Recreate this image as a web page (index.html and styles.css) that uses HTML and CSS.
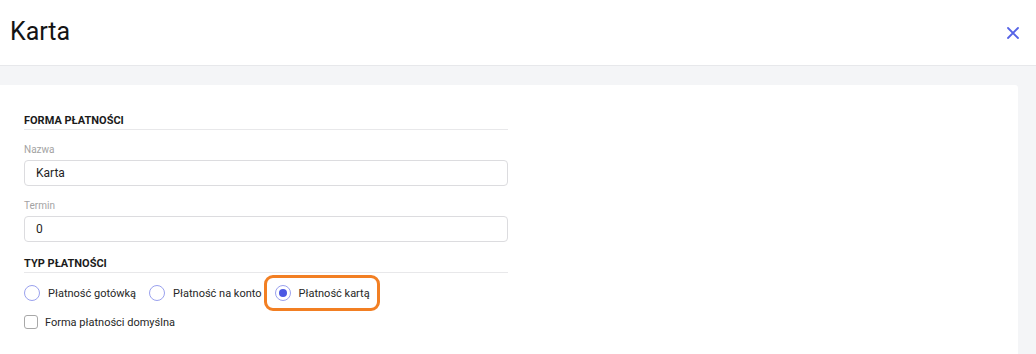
FILE: index.html
```html
<!DOCTYPE html>
<html lang="pl">
<head>
    <meta charset="UTF-8">
    <meta name="viewport" content="width=device-width, initial-scale=1.0">
    <title>Karta</title>
    <link rel="stylesheet" href="styles.css">
</head>
<body>
    <header class="modal-header">
        <h1>Karta</h1>
        <button type="button" class="close-btn" aria-label="Zamknij">
            <svg width="12" height="12" viewBox="0 0 12 12">
                <path d="M1 1 L11 11 M11 1 L1 11" stroke="currentColor" stroke-width="1.8" stroke-linecap="round"/>
            </svg>
        </button>
    </header>

    <main class="modal-body">
        <form class="card">
            <!-- forma płatności -->
            <div class="section-title">Forma płatności</div>
            <div class="form-group">
                <label for="nazwa">Nazwa</label>
                <input type="text" id="nazwa" value="Karta">
            </div>
            <div class="form-group">
                <label for="termin">Termin</label>
                <input type="text" id="termin" value="0">
            </div>

            <!-- typ płatności -->
            <div class="section-title">Typ płatności</div>
            <div class="radio-row">
                <label class="radio">
                    <input type="radio" name="typ">
                    <span>Płatność gotówką</span>
                </label>
                <label class="radio">
                    <input type="radio" name="typ">
                    <span>Płatność na konto</span>
                </label>
                <label class="radio highlight">
                    <input type="radio" name="typ" checked>
                    <span>Płatność kartą</span>
                </label>
            </div>
            <label class="checkbox">
                <input type="checkbox">
                <span>Forma płatności domyślna</span>
            </label>
        </form>
    </main>
</body>
</html>
```

FILE: styles.css
```css
body {
    font-family: Roboto, "Liberation Sans", Arial, sans-serif;
    margin: 0;
    padding: 0;
    background-color: #f4f5f7;
    color: #1f1f1f;
    height: 100vh;
    display: flex;
    flex-direction: column;
    overflow: hidden;
}
.modal-header {
    flex: none;
    height: 65px;
    background-color: #fff;
    border-bottom: 1px solid #e7e8eb;
    display: flex;
    align-items: center;
    justify-content: space-between;
    padding: 0 17px 0 10px;
}
.modal-header h1 {
    margin: 0;
    font-size: 25px;
    font-weight: 400;
    color: #141414;
    padding-bottom: 3px;
}
.close-btn {
    border: none;
    background: none;
    padding: 0;
    width: 12px;
    height: 12px;
    color: #5563e6;
    display: flex;
    cursor: pointer;
}
.modal-body {
    flex: 1;
    display: flex;
    padding: 19px 18px 0 0;
}
.card {
    flex: 1;
    background-color: #fff;
    border-radius: 0 3px 0 0;
    padding: 29px 24px 0 24px;
}
.section-title {
    width: 484px;
    font-size: 11px;
    line-height: 13px;
    font-weight: 700;
    text-transform: uppercase;
    color: #1b1b1b;
    padding-bottom: 2px;
    border-bottom: 1px solid #e8e8ea;
    margin-bottom: 14px;
}
.form-group {
    width: 484px;
    margin-bottom: 14px;
}
.form-group label {
    display: block;
    font-size: 10px;
    line-height: 12px;
    color: #a3a3a3;
    margin-bottom: 4px;
}
.form-group input {
    box-sizing: border-box;
    width: 100%;
    height: 26px;
    padding: 0 11px;
    border: 1px solid #dcdcdf;
    border-radius: 4px;
    font-family: inherit;
    font-size: 12px;
    color: #1f1f1f;
    outline: none;
}
.form-group + .section-title {
    margin-top: 15px;
}
.section-title + .radio-row {
    margin-top: -11px;
}
.radio-row {
    display: flex;
    align-items: center;
    height: 28px;
    padding-top: 3px;
}
.radio {
    position: relative;
    display: flex;
    align-items: center;
    gap: 8px;
    margin-right: 13px;
    font-size: 11px;
    color: #262626;
    cursor: pointer;
}
.radio input {
    appearance: none;
    margin: 0;
    width: 16px;
    height: 16px;
    border: 1px solid #9aa1ee;
    border-radius: 50%;
    background-color: #fff;
    display: grid;
    place-items: center;
}
.radio input:checked::before {
    content: "";
    width: 8px;
    height: 8px;
    border-radius: 50%;
    background-color: #4b58e3;
}
/* zaznaczenie wybranej opcji */
.highlight::after {
    content: "";
    position: absolute;
    left: -11px;
    right: -10px;
    top: -10px;
    bottom: -10px;
    border: 3px solid #f27f23;
    border-radius: 9px;
}
.checkbox {
    display: flex;
    align-items: center;
    gap: 7px;
    margin-top: 5px;
    height: 20px;
    font-size: 11px;
    color: #262626;
    cursor: pointer;
}
.checkbox input {
    appearance: none;
    margin: 0;
    width: 14px;
    height: 14px;
    border: 1px solid #a8a8a8;
    border-radius: 3px;
    background-color: #fff;
}
```
